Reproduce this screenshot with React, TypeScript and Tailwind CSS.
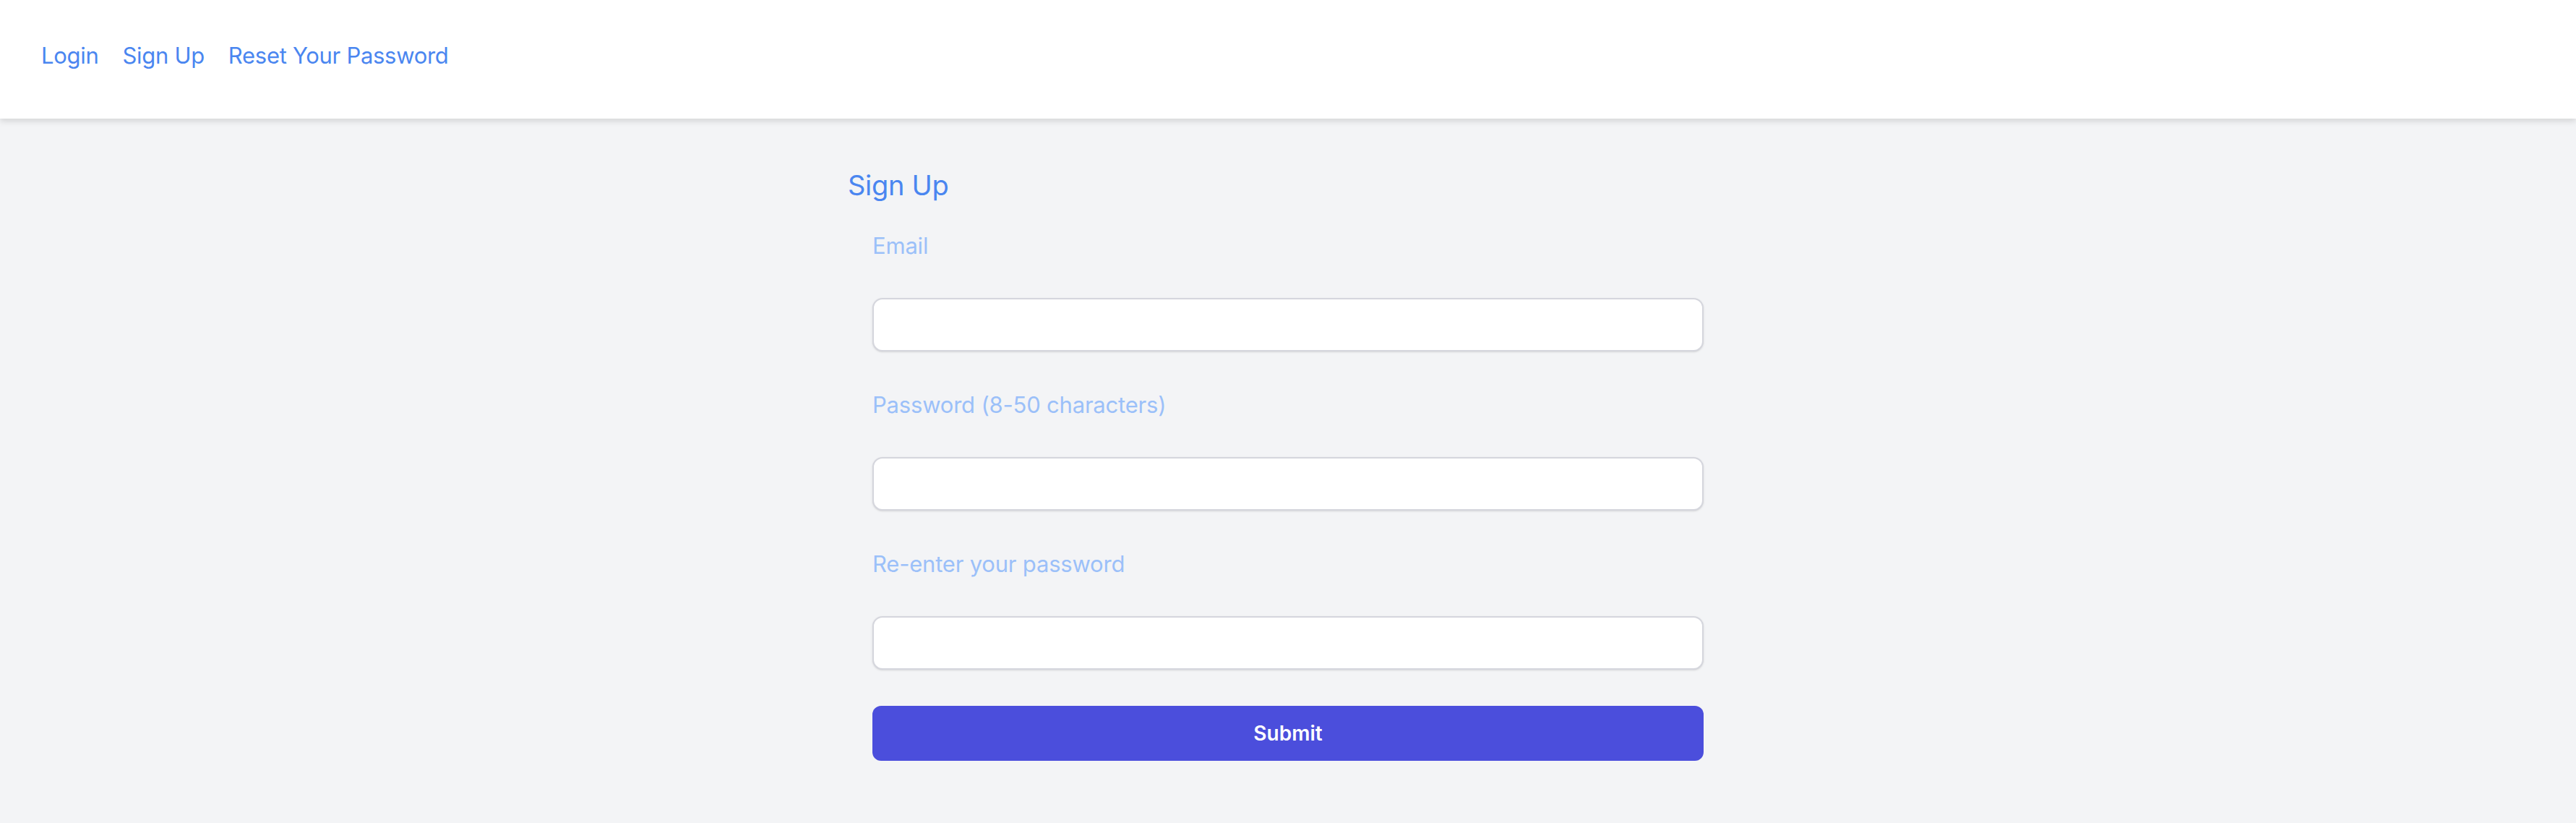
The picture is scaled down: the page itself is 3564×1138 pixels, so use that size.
import { useState } from "react";

const FONT = { fontFamily: "Inter, 'Noto Sans', 'Liberation Sans', sans-serif" };

interface FieldProps {
  label: string;
  type: string;
  value: string;
  onChange: (v: string) => void;
}

function Field({ label, type, value, onChange }: FieldProps) {
  return (
    <div className="flex flex-col">
      <label className="text-[31px] leading-[40px] tracking-[-0.2px] text-[#9bc0f9] mb-[52px]">{label}</label>
      <input
        type={type}
        value={value}
        onChange={(e) => onChange(e.target.value)}
        className="h-[74px] w-full rounded-[14px] border-2 border-[#d5d6dd] bg-white px-5 text-[30px] shadow-sm outline-none"
      />
    </div>
  );
}

export default function App() {
  const [email, setEmail] = useState("");
  const [password, setPassword] = useState("");
  const [confirm, setConfirm] = useState("");

  return (
    <div className="min-h-[1138px] bg-[#f3f4f6]" style={FONT}>
      {/* Top nav */}
      <nav className="flex h-[164px] items-center gap-[33px] bg-white px-[57px] pb-[10px] shadow-[0_4px_8px_rgba(0,0,0,0.12)]">
        <a href="#" className="text-[31px] tracking-[-0.3px] text-[#4a86f0]">Login</a>
        <a href="#" className="text-[31px] tracking-[-0.3px] text-[#4a86f0]">Sign Up</a>
        <a href="#" className="text-[31px] tracking-[-0.3px] text-[#4a86f0]">Reset Your Password</a>
      </nav>

      {/* Sign up form */}
      <main className="mx-auto w-[1218px] pt-[68px]">
        <h1 className="text-[38px] leading-[48px] tracking-[-0.3px] text-[#4a86f0] mb-[40px]">Sign Up</h1>
        <form className="flex flex-col gap-[54px] px-[34px]" onSubmit={(e) => e.preventDefault()}>
          <Field label="Email" type="email" value={email} onChange={setEmail} />
          <Field label="Password (8-50 characters)" type="password" value={password} onChange={setPassword} />
          <Field label="Re-enter your password" type="password" value={confirm} onChange={setConfirm} />
          <button
            type="submit"
            className="-mt-[4px] h-[76px] w-full rounded-[12px] bg-[#4b4edc] text-[28px] font-semibold text-white"
          >
            Submit
          </button>
        </form>
      </main>
    </div>
  );
}
